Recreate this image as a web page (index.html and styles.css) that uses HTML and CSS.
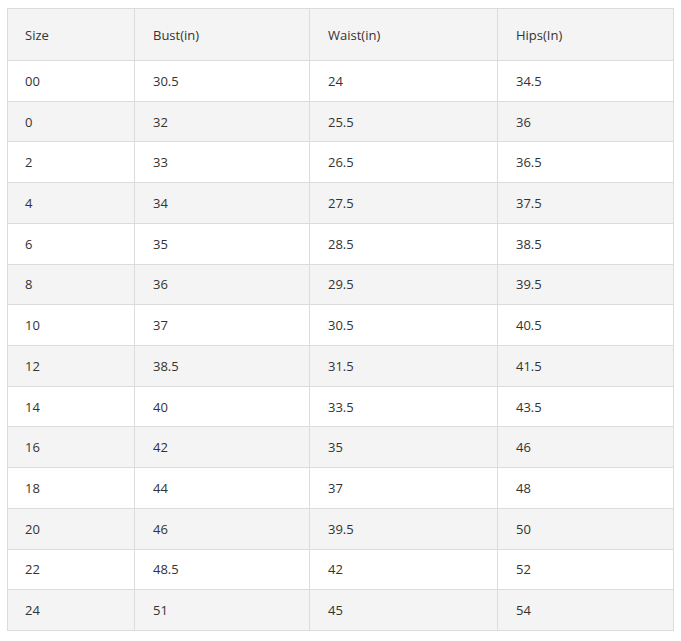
FILE: index.html
```html
<!DOCTYPE html>
<html>
<head>
<meta charset="utf-8">
<link rel="stylesheet" href="styles.css">
</head>
<body>
<table class="size-table">
  <colgroup>
    <col class="c1"><col class="c2"><col class="c3"><col class="c4">
  </colgroup>
  <thead>
    <tr><th>Size</th><th>Bust(in)</th><th>Waist(in)</th><th>Hips(In)</th></tr>
  </thead>
  <tbody>
    <tr><td>00</td><td>30.5</td><td>24</td><td>34.5</td></tr>
    <tr><td>0</td><td>32</td><td>25.5</td><td>36</td></tr>
    <tr><td>2</td><td>33</td><td>26.5</td><td>36.5</td></tr>
    <tr><td>4</td><td>34</td><td>27.5</td><td>37.5</td></tr>
    <tr><td>6</td><td>35</td><td>28.5</td><td>38.5</td></tr>
    <tr><td>8</td><td>36</td><td>29.5</td><td>39.5</td></tr>
    <tr><td>10</td><td>37</td><td>30.5</td><td>40.5</td></tr>
    <tr><td>12</td><td>38.5</td><td>31.5</td><td>41.5</td></tr>
    <tr><td>14</td><td>40</td><td>33.5</td><td>43.5</td></tr>
    <tr><td>16</td><td>42</td><td>35</td><td>46</td></tr>
    <tr><td>18</td><td>44</td><td>37</td><td>48</td></tr>
    <tr><td>20</td><td>46</td><td>39.5</td><td>50</td></tr>
    <tr><td>22</td><td>48.5</td><td>42</td><td>52</td></tr>
    <tr><td>24</td><td>51</td><td>45</td><td>54</td></tr>
  </tbody>
</table>
</body>
</html>
```

FILE: styles.css
```css
html, body {
  margin: 0;
  padding: 0;
  background: #fff;
}
body {
  padding: 8px 7px;
  font-family: "Open Sans", "Liberation Sans", sans-serif;
  font-size: 13px;
  color: #333;
}
.size-table {
  border-collapse: collapse;
  table-layout: fixed;
  width: 666px;
}
.c1 { width: 127px; }
.c2 { width: 175px; }
.c3 { width: 188px; }
.c4 { width: 176px; }
.size-table th,
.size-table td {
  border: 1px solid #dcdcdc;
  padding: 0 0 0 18px;
  text-align: left;
  font-weight: normal;
  vertical-align: middle;
}
.size-table th:first-child,
.size-table td:first-child {
  padding-left: 17px;
}
.size-table th {
  height: 51px;
  background: #f4f4f4;
}
.size-table td {
  height: 39.72px;
}
.size-table tbody tr:nth-child(even) td {
  background: #f4f4f4;
}
```
